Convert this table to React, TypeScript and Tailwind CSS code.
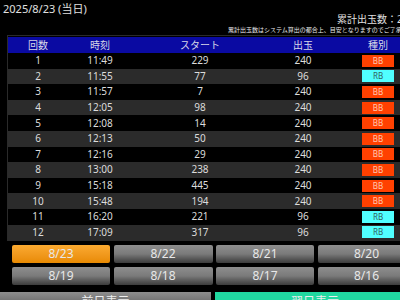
import React from "react";

const rows: [number, string, number, number, "BB" | "RB"][] = [
  [1, "11:49", 229, 240, "BB"],
  [2, "11:55", 77, 96, "RB"],
  [3, "11:57", 7, 240, "BB"],
  [4, "12:05", 98, 240, "BB"],
  [5, "12:08", 14, 240, "BB"],
  [6, "12:13", 50, 240, "BB"],
  [7, "12:16", 29, 240, "BB"],
  [8, "13:00", 238, 240, "BB"],
  [9, "15:18", 445, 240, "BB"],
  [10, "15:48", 194, 240, "BB"],
  [11, "16:20", 221, 96, "RB"],
  [12, "17:09", 317, 96, "RB"],
];

const dates1 = ["8/23", "8/22", "8/21", "8/20"];
const dates2 = ["8/19", "8/18", "8/17", "8/16"];

function DateBtn({ label, active }: { label: string; active?: boolean }) {
  return (
    <div
      className={
        "h-[18px] flex items-center justify-center text-[12px] text-[#e8e8e8] rounded-[2px] " +
        (active
          ? "bg-gradient-to-b from-[#fbaa30] to-[#e88a00]"
          : "bg-gradient-to-b from-[#8e8e8e] via-[#7a7a7a] to-[#3c3c3c]")
      }
    >
      {label}
    </div>
  );
}

export default function App() {
  return (
    <div
      className="w-[400px] h-[300px] overflow-hidden bg-black text-[#dcdcdc]"
      style={{ fontFamily: '"Noto Sans", "Noto Sans CJK JP", sans-serif' }}
    >
      <div className="w-[430px]">
        <div className="pl-[3px] pt-[2px] h-[12px] text-[11px] leading-[14px] text-[#e0e0e0] whitespace-nowrap">
          2025/8/23 (当日)
        </div>
        <div className="pl-[337px] h-[15px] text-[10px] leading-[15px] whitespace-nowrap text-[#e0e0e0]">
          累計出玉数：2,340
        </div>
        <div className="pl-[228px] h-[7px] text-[6px] leading-[7px] whitespace-nowrap text-[#e8e8e8]">
          累計出玉数はシステム算出の都合上、目安となりますのでご了承ください。
        </div>
        <div className="ml-[7px] mt-[1px] border border-[#2a2a2a] pt-[1px] w-[420px]">
          <div className="flex h-[16px] items-center bg-[#0a0aa2] text-[10px] text-[#d8d8e8]">
            <div className="w-[60px] text-center">回数</div>
            <div className="w-[64px] text-center">時刻</div>
            <div className="w-[136px] text-center">スタート</div>
            <div className="w-[70px] text-center">出玉</div>
            <div className="w-[80px] text-center">種別</div>
          </div>
          {rows.map(([n, t, s, o, k], i) => (
            <div
              key={n}
              className={
                "flex h-[15.6px] items-center text-[10px] " +
                (i % 2 === 1 ? "bg-[#2b2b2b]" : "bg-black")
              }
            >
              <div className="w-[60px] text-center">{n}</div>
              <div className="w-[64px] text-center">{t}</div>
              <div className="w-[136px] text-center">{s}</div>
              <div className="w-[70px] text-center">{o}</div>
              <div className="w-[80px] flex justify-center">
                <div
                  className={
                    "w-[32px] h-[12px] flex items-center justify-center text-[8px] " +
                    (k === "BB"
                      ? "bg-[#ff4000] text-[#ffc8b0]"
                      : "bg-[#50ffff] text-[#306060]")
                  }
                >
                  {k}
                </div>
              </div>
            </div>
          ))}
        </div>
        <div className="pl-[12px] pt-[4px] grid grid-cols-[98px_99px_98px_98px] gap-x-[3.5px] gap-y-[4px]">
          {dates1.map((d, i) => (
            <DateBtn key={d} label={d} active={i === 0} />
          ))}
          {dates2.map((d) => (
            <DateBtn key={d} label={d} />
          ))}
        </div>
        <div className="mt-[7px] flex gap-[4px]">
          <div className="w-[211px] h-[20px] pt-[3px] bg-gradient-to-b from-[#8e8e8e] to-[#555] text-[12px] leading-[14px] text-center text-[#eee]">
            前日表示
          </div>
          <div className="w-[200px] h-[20px] pt-[3px] bg-[#20d8a0] text-[12px] leading-[14px] text-center text-[#eee]">
            翌日表示
          </div>
        </div>
      </div>
    </div>
  );
}
